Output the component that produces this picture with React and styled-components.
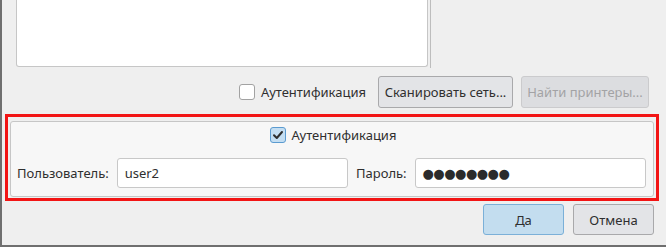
import React from "react";
import styled, { createGlobalStyle } from "styled-components";

const Global = createGlobalStyle`
  html, body { margin: 0; padding: 0; background: #efefef; }
  body { font-family: "Noto Sans", "Open Sans", sans-serif; font-size: 13px; color: #2f2f2f; }
  * { box-sizing: border-box; }
`;

const Window = styled.div`
  width: 666px;
  height: 247px;
  background: #efefef;
  border-left: 2px solid #6f6f6f;
  border-bottom: 2px solid #6f6f6f;
  display: flex;
  flex-direction: column;
  overflow: hidden;
`;

const TopArea = styled.div`
  height: 68px;
  display: flex;
  align-items: flex-start;
  padding-left: 14px;
  gap: 2px;
`;

const ListBox = styled.div`
  width: 412px;
  height: 67px;
  background: #ffffff;
  border: 1px solid #c6c6c6;
  border-top: none;
  border-radius: 0 0 3px 3px;
`;

const Splitter = styled.div`
  width: 1px;
  height: 68px;
  background: #bdbdbd;
`;

const ScanRow = styled.div`
  margin-top: 8px;
  height: 32px;
  display: flex;
  align-items: center;
  justify-content: flex-end;
  padding-right: 17px;
`;

const CheckLabel = styled.label`
  display: flex;
  align-items: center;
  gap: 6px;
  margin-right: ${(p) => p.$mr || 0}px;
  white-space: nowrap;
`;

const Box = styled.span`
  width: 16px;
  height: 16px;
  border-radius: 3px;
  border: 1px solid ${(p) => (p.$checked ? "#5b9bd0" : "#a2a2a2")};
  background: ${(p) => (p.$checked ? "#c4def2" : "#ffffff")};
  display: flex;
  align-items: center;
  justify-content: center;
`;

const Button = styled.button`
  font-family: "Noto Sans", "Open Sans", sans-serif;
  font-size: 13px;
  height: ${(p) => p.$h || 32}px;
  width: ${(p) => (p.$w ? p.$w + "px" : "auto")};
  padding: 0 4px;
  border-radius: 3px;
  border: 1px solid ${(p) => (p.$primary ? "#7bb0d8" : p.disabled ? "#cbcbcd" : "#a9a9ab")};
  background: ${(p) => (p.$primary ? "#c3ddef" : p.disabled ? "#dcdde0" : "#e3e4e7")};
  color: ${(p) => (p.disabled ? "#a3a3a5" : "#2f2f2f")};
  white-space: nowrap;
  margin-left: ${(p) => p.$ml || 0}px;
`;

const Highlight = styled.div`
  margin: 6px 0 0 3px;
  width: 654px;
  height: 87px;
  border: 3px solid #f21414;
  padding: 4px 2px 1px 2px;
  display: flex;
`;

const GroupBox = styled.div`
  flex: 1;
  border: 1px solid #c6c6c6;
  border-radius: 3px;
  background: #f7f7f7;
  display: flex;
  flex-direction: column;
  padding: 5px 7px 7px 6px;
`;

const CenterRow = styled.div`
  display: flex;
  justify-content: center;
  height: 16px;
  padding-left: 3px;
`;

const FieldGrid = styled.div`
  margin-top: 15px;
  display: grid;
  grid-template-columns: auto 1fr auto 1fr;
  align-items: center;
  column-gap: 8px;
`;

const FieldLabel = styled.span`
  white-space: nowrap;
`;

const Field = styled.div`
  height: 30px;
  background: #ffffff;
  border: 1px solid #c8c8c8;
  border-radius: 3px;
  display: flex;
  align-items: center;
  padding-left: 7px;
`;

const Dots = styled.span`
  font-family: "DejaVu Sans", sans-serif;
  font-size: 13px;
  letter-spacing: -0.5px;
  color: #2b2b2b;
`;

const FooterRow = styled.div`
  margin-top: 3px;
  display: flex;
  justify-content: flex-end;
  padding-right: 12px;
  gap: 9px;
`;

const Check = () => (
  <svg width="12" height="12" viewBox="0 0 12 12">
    <path d="M2 6.2 L4.8 9 L10 3" fill="none" stroke="#2e2e2e" strokeWidth="2" strokeLinecap="round" strokeLinejoin="round" />
  </svg>
);

export default function App() {
  return (
    <>
      <Global />
      <Window>
        <TopArea>
          <ListBox />
          <Splitter />
        </TopArea>
        <ScanRow>
          <CheckLabel $mr={12}>
            <Box />
            Аутентификация
          </CheckLabel>
          <Button $w={135}>Сканировать сеть...</Button>
          <Button disabled $w={128} $ml={8}>Найти принтеры...</Button>
        </ScanRow>
        <Highlight>
          <GroupBox>
            <CenterRow>
              <CheckLabel>
                <Box $checked>
                  <Check />
                </Box>
                Аутентификация
              </CheckLabel>
            </CenterRow>
            <FieldGrid>
              <FieldLabel>Пользователь:</FieldLabel>
              <Field>user2</Field>
              <FieldLabel>Пароль:</FieldLabel>
              <Field>
                <Dots>●●●●●●●●</Dots>
              </Field>
            </FieldGrid>
          </GroupBox>
        </Highlight>
        <FooterRow>
          <Button $primary $w={81} $h={31}>Да</Button>
          <Button $w={81} $h={31}>Отмена</Button>
        </FooterRow>
      </Window>
    </>
  );
}
